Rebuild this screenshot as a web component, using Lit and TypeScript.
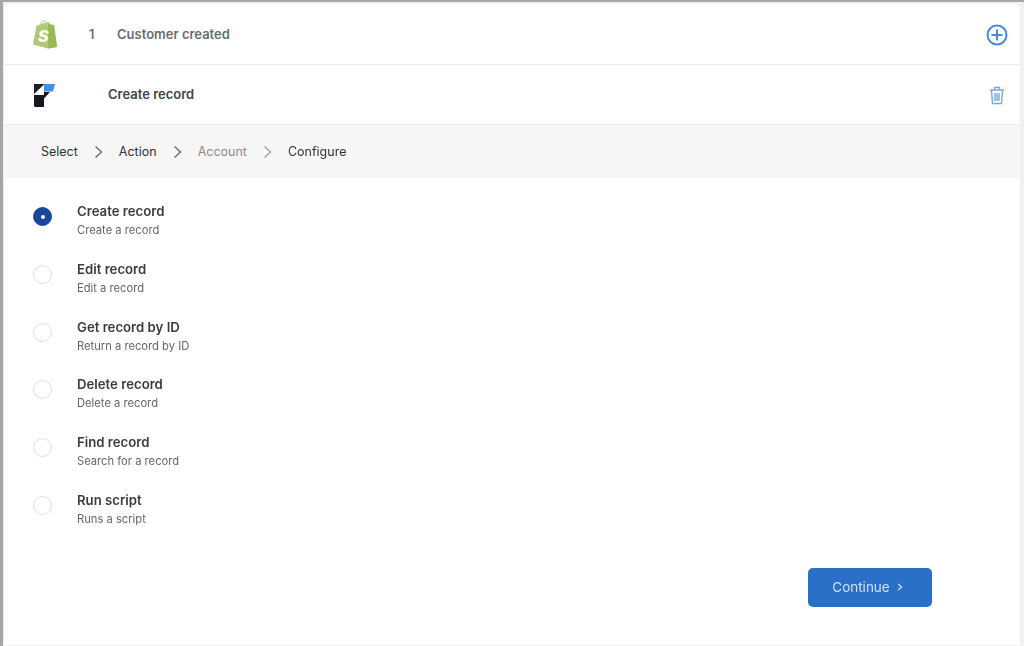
import { LitElement, html, css, svg } from "lit";
import { customElement } from "lit/decorators.js";

const options = [
  ["Create record", "Create a record"],
  ["Edit record", "Edit a record"],
  ["Get record by ID", "Return a record by ID"],
  ["Delete record", "Delete a record"],
  ["Find record", "Search for a record"],
  ["Run script", "Runs a script"],
];

const chevron = svg`<svg class="chev" width="10" height="14" viewBox="0 0 10 14" fill="none"><path d="M1.500 1.500 7.500 7l-6 5.500" stroke="currentColor" stroke-width="1.500"/></svg>`;

@customElement("app-root")
export class AppRoot extends LitElement {
  static styles = css`
    :host { display: block; width: 1024px; height: 646px; background: #a6a6a6; font-family: Inter, "Liberation Sans", sans-serif; overflow: hidden; box-sizing: border-box; padding: 2px 0 0 3px; }
    .frame { height: 644px; background: #f1f1f1; padding: 2px 4px 1px 1px; box-sizing: border-box; }
    .card { height: 641px; background: #fff; border-radius: 5px 5px 0 0; display: flex; flex-direction: column; filter: blur(0.35px); }
    .row { display: flex; align-items: center; border-bottom: 1px solid #ececec; flex: none; }
    .r1 { height: 60px; padding-left: 26px; }
    .r2 { height: 60px; padding-left: 29px; padding-bottom: 1px; box-sizing: border-box; }
    .logo { margin-top: 2px; }
    .num { margin-left: 31px; width: 28px; font-size: 13px; font-weight: 500; color: #5f6368; }
    .title1 { font-size: 13px; font-weight: 600; color: #6a6d70; }
    .title2 { margin-left: 53px; font-size: 13px; font-weight: 600; color: #444; }
    .end { margin-left: auto; display: flex; }
    .r1 .end { margin-right: 12px; margin-top: 2px; }
    .r2 .end { margin-right: 15px; margin-top: 2px; }
    .crumbs { height: 53px; flex: none; background: #f6f6f6; display: flex; align-items: center; padding-left: 37px; font-size: 12.500px; color: #333; }
    .crumbs .muted { color: #8b8b8b; }
    .chev { color: #6f6f6f; margin: 0 15px 0 16px; }
    .chev.m { color: #a5a5a5; }
    .list { display: flex; flex-direction: column; padding: 25px 0 0 29px; gap: 19.800px; flex: none; }
    .opt { display: flex; align-items: flex-start; height: 38px; }
    .radio { width: 17px; height: 17px; margin-top: 4px; border: 1.500px solid #dedede; border-radius: 50%; background: #fff; box-sizing: content-box; flex: none; margin-right: 25px; position: relative; }
    .radio.on { background: #17469e; border-color: #17469e; }
    .radio.on::after { content: ""; position: absolute; left: 6.500px; top: 6.500px; width: 4px; height: 4px; border-radius: 50%; background: #fff; }
    .name { font-size: 13.200px; font-weight: 600; color: #3c3c3c; line-height: 17px; }
    .desc { font-size: 11.200px; color: #666; line-height: 16px; margin-top: 2px; }
    .foot { display: flex; justify-content: flex-end; padding: 38px 88px 0 0; }
    .btn { width: 124px; height: 39px; border: none; background: #2a70c9; border-radius: 5px; color: #cfe0f5; font: 400 13.500px Inter, "Liberation Sans", sans-serif; display: flex; align-items: center; justify-content: center; gap: 7px; padding: 0 5px 0 0; }
  `;

  render() {
    return html`<div class="frame"><div class="card">
      <div class="row r1">
        <svg width="28" height="30" viewBox="0 0 28 30">
          <path d="M3 25.500 6.500 6.500 18 3l2.500 2.500L24 6l3 22-9 1.500z" fill="#aecb74"/>
          <path d="M18 3 19.500 5.500 24 6l3 22-9 1.500z" fill="#97b95c"/>
          <path d="M10 7c.5-3 2-5 4-5s3 2 3 4" fill="none" stroke="#c3d99a" stroke-width="1.200"/>
          <text x="8" y="22.500" font-family="Inter, sans-serif" font-weight="800" font-style="italic" font-size="16" fill="#fff">S</text>
        </svg>
        <span class="num">1</span>
        <span class="title1">Customer created</span>
        <span class="end"><svg width="22" height="22" viewBox="0 0 22 22" fill="none" stroke="#4a88d6" stroke-width="2"><circle cx="11" cy="11" r="9.500"/><path d="M11 5.500v11M5.500 11h11"/></svg></span>
      </div>
      <div class="row r2">
        <svg class="logo" width="22" height="24" viewBox="0 0 22 24">
          <path d="M1 1h10v.5L1 11z" fill="#1d1d24"/>
          <path d="M11 1h11l-2 7.500h-9z" fill="#3f8fea"/>
          <path d="M1 12h10v12H2l-1-1z" fill="#17171f"/>
          <path d="M11 9h6l-6 6.500z" fill="#17171f"/>
        </svg>
        <span class="title2">Create record</span>
        <span class="end"><svg width="16" height="19" viewBox="0 0 16 19" fill="none" stroke="#7aa8e0" stroke-width="1.400"><path d="M1 4h14M5.500 3.500V1.500h5v2M2.500 4.500l1 13h9l1-13M6 7v8M8 7v8M10 7v8"/></svg></span>
      </div>
      <div class="crumbs">
        <span>Select</span>${chevron}
        <span>Action</span>${chevron}
        <span class="muted">Account</span>
        <svg class="chev m" width="10" height="14" viewBox="0 0 10 14" fill="none"><path d="M1.500 1.500 7.500 7l-6 5.500" stroke="currentColor" stroke-width="1.500"/></svg>
        <span>Configure</span>
      </div>
      <div class="list">
        ${options.map(([n, d], i) => html`<div class="opt">
          <span class="radio ${i === 0 ? "on" : ""}"></span>
          <div><div class="name">${n}</div><div class="desc">${d}</div></div>
        </div>`)}
      </div>
      <div class="foot"><button class="btn">Continue
        <svg width="6" height="8" viewBox="0 0 6 8" fill="none"><path d="M1.200 1 4.500 4 1.200 7" stroke="#cfe0f5" stroke-width="1.200"/></svg>
      </button></div>
    </div></div>`;
  }
}
